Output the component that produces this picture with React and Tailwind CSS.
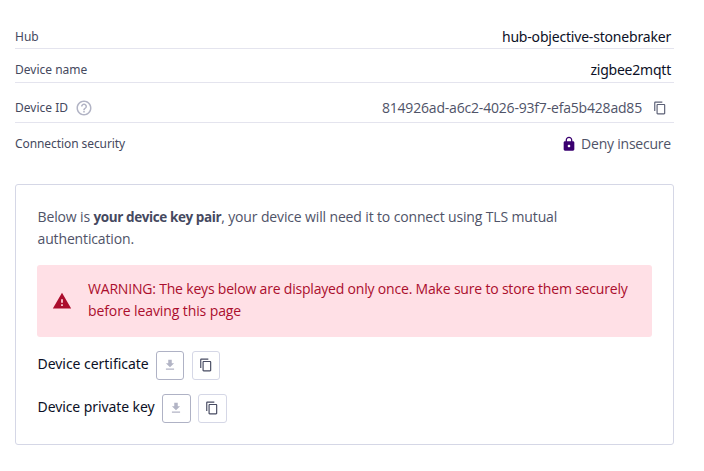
import clsx from "clsx";

const COPY = "M16 1H4c-1.1 0-2 .9-2 2v14h2V3h12V1zm3 4H8c-1.1 0-2 .9-2 2v14c0 1.1.9 2 2 2h11c1.1 0 2-.9 2-2V7c0-1.1-.9-2-2-2zm0 16H8V7h11v14z";
const DOWNLOAD = "M19 9h-4V3H9v6H5l7 7 7-7zM5 18v2h14v-2H5z";
const LOCK = "M18 8h-1V6c0-2.76-2.24-5-5-5S7 3.24 7 6v2H6c-1.1 0-2 .9-2 2v10c0 1.1.9 2 2 2h12c1.1 0 2-.9 2-2V10c0-1.1-.9-2-2-2zm-6 9c-1.1 0-2-.9-2-2s.9-2 2-2 2 .9 2 2-.9 2-2 2zm3.1-9H8.9V6c0-1.71 1.39-3.1 3.1-3.1 1.71 0 3.1 1.39 3.1 3.1v2z";
const HELP = "M11 18h2v-2h-2v2zm1-16C6.48 2 2 6.48 2 12s4.48 10 10 10 10-4.48 10-10S17.52 2 12 2zm0 18c-4.41 0-8-3.59-8-8s3.59-8 8-8 8 3.59 8 8-3.59 8-8 8zm0-14c-2.21 0-4 1.79-4 4h2c0-1.1.9-2 2-2s2 .9 2 2c0 2-3 1.75-3 5h2c0-2.25 3-2.5 3-5 0-2.21-1.79-4-4-4z";
const WARNING = "M1 21h22L12 2 1 21zm12-3h-2v-2h2v2zm0-4h-2v-4h2v4z";

function Icon({ d, className }) {
  return (
    <svg viewBox="0 0 24 24" fill="currentColor" className={clsx("shrink-0", className)} aria-hidden="true">
      <path d={d} />
    </svg>
  );
}

function Row({ label, help, className, labelClass, children }) {
  return (
    <div className={clsx("flex justify-between border-[#e4e4ee]", className)}>
      <div className={clsx("flex items-center text-[12px] leading-5 text-[#45495e]", labelClass)}>
        {label}
        {help && <Icon d={HELP} className="ml-[7px] size-[18px] text-[#b2b4c5]" />}
      </div>
      <div className="flex items-center pr-[3px] text-[14px] leading-5">{children}</div>
    </div>
  );
}

function KeyRow({ label, textClass, wide }) {
  const w = wide ? "w-[29px]" : "w-[28px]";
  return (
    <div className="flex h-[29px] items-center">
      <span className={clsx("whitespace-nowrap pb-[3px] text-[14px] leading-5 text-[#0c1026]", textClass)}>{label}</span>
      <button className={clsx("flex h-[29px] items-center justify-center rounded-[3px] border border-[#afb2c5] pb-px", w)}>
        <Icon d={DOWNLOAD} className={clsx("size-[14px] text-[#b2b4c5]", wide && "mr-px")} />
      </button>
      <button className={clsx("flex h-[29px] items-center justify-center rounded-[3px] border border-[#d5d7e6] pb-px", w, wide ? "ml-[7px]" : "ml-2")}>
        <Icon d={COPY} className={clsx("size-[14px] text-[#474b62]", wide && "mr-px")} />
      </button>
    </div>
  );
}

export default function App() {
  return (
    <div className="h-[471px] w-[704px] bg-white pl-[15px] pr-[30px] pt-[25px] font-['Noto_Sans',sans-serif]">
      <Row label="Hub" className="h-6 border-b">
        <span className="tracking-[-0.19px] text-[#0c1026]">hub-objective-stonebraker</span>
      </Row>
      <Row label="Device name" className="h-[34px] border-b pt-[9px]">
        <span className="tracking-[-0.22px] text-[#0c1026]">zigbee2mqtt</span>
      </Row>
      <Row label="Device ID" help className="h-10 border-b pt-[10px]">
        <span className="font-['Open_Sans',sans-serif] tracking-[-0.19px] text-[#4f5368]">814926ad-a6c2-4026-93f7-efa5b428ad85</span>
        <Icon d={COPY} className="ml-[11px] mr-1 mt-px size-[14px] text-[#5c6076]" />
      </Row>
      <Row label="Connection security" className="h-[41px]" labelClass="tracking-[-0.08px]">
        <Icon d={LOCK} className="mr-1 mt-px size-4 text-[#3a0070]" />
        <span className="font-['Open_Sans',sans-serif] tracking-[-0.22px] text-[#4f5368]">Deny insecure</span>
      </Row>

      <section className="mt-5 h-[261px] rounded-[3px] border border-[#d5d7e6] pl-[21px] pr-[21px] pt-[21px]">
        <p className="whitespace-nowrap pl-[0.5px] font-['Open_Sans',sans-serif] text-[14px] leading-[22px] tracking-[-0.14px] text-[#4f5368]">
          Below is <b className="text-[13.5px] font-bold tracking-[-0.4px] text-[#454960]">your device key pair</b>, your device will need it to connect using TLS mutual
          <br />
          authentication.
        </p>
        <div className="mt-[15px] flex h-[72px] items-center rounded-[3px] bg-[#ffe0e6] pl-[15px] text-[#ab0e2d]">
          <Icon d={WARNING} className="mb-px size-5" />
          <p className="ml-4 whitespace-nowrap pb-[2px] font-['Open_Sans',sans-serif] text-[14px] leading-[22px] tracking-[-0.19px]">
            WARNING: The keys below are displayed only once. Make sure to store them securely
            <br />
            <span className="tracking-[-0.1px]">before leaving this page</span>
          </p>
        </div>
        <div className="mt-[14px] flex flex-col gap-[14px] pl-[0.5px]">
          <KeyRow label="Device certificate" textClass="w-[118px] tracking-[-0.04px]" />
          <KeyRow label="Device private key" textClass="w-[124px] tracking-[-0.09px]" wide />
        </div>
      </section>
    </div>
  );
}
